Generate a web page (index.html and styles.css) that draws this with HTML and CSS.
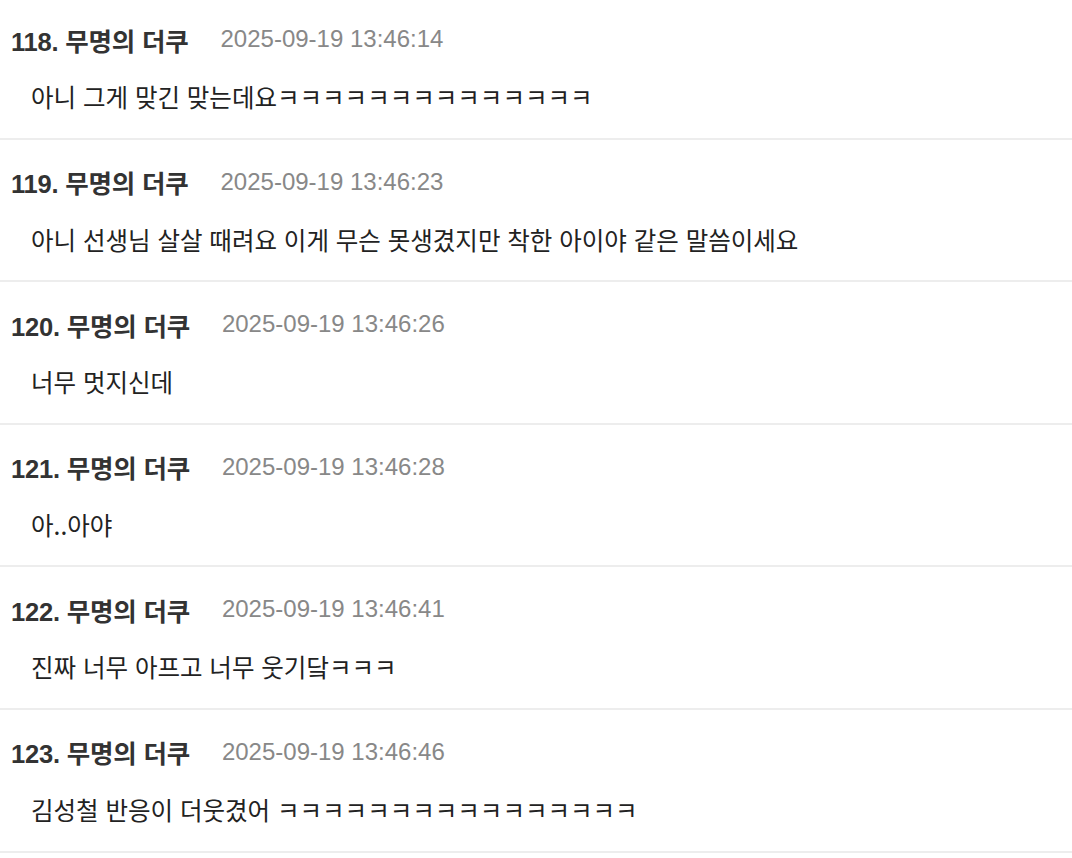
FILE: index.html
```html
<!DOCTYPE html>
<html lang="ko">
<head>
<meta charset="utf-8">
<link rel="stylesheet" href="styles.css">
</head>
<body>
<div class="list">
  <div class="post">
    <div class="head"><span class="name">118. 무명의 더쿠</span><span class="date">2025-09-19 13:46:14</span></div>
    <div class="body">아니 그게 맞긴 맞는데요ㅋㅋㅋㅋㅋㅋㅋㅋㅋㅋㅋㅋㅋㅋ</div>
  </div>
  <div class="post">
    <div class="head"><span class="name">119. 무명의 더쿠</span><span class="date">2025-09-19 13:46:23</span></div>
    <div class="body">아니 선생님 살살 때려요 이게 무슨 못생겼지만 착한 아이야 같은 말씀이세요</div>
  </div>
  <div class="post">
    <div class="head"><span class="name">120. 무명의 더쿠</span><span class="date">2025-09-19 13:46:26</span></div>
    <div class="body">너무 멋지신데</div>
  </div>
  <div class="post">
    <div class="head"><span class="name">121. 무명의 더쿠</span><span class="date">2025-09-19 13:46:28</span></div>
    <div class="body">아..아야</div>
  </div>
  <div class="post">
    <div class="head"><span class="name">122. 무명의 더쿠</span><span class="date">2025-09-19 13:46:41</span></div>
    <div class="body">진짜 너무 아프고 너무 웃기닼ㅋㅋㅋ</div>
  </div>
  <div class="post">
    <div class="head"><span class="name">123. 무명의 더쿠</span><span class="date">2025-09-19 13:46:46</span></div>
    <div class="body">김성철 반응이 더웃겼어 ㅋㅋㅋㅋㅋㅋㅋㅋㅋㅋㅋㅋㅋㅋㅋㅋ</div>
  </div>
</div>
</body>
</html>
```
FILE: styles.css
```css
html, body {
  margin: 0;
  padding: 0;
  background: #ffffff;
}
body {
  font-family: "Liberation Sans", "Noto Sans CJK KR", sans-serif;
  color: #222;
}
.list {
  margin-top: -3px;
}
.post {
  height: 140.6px;
  border-bottom: 2px solid #ededed;
  display: flex;
  flex-direction: column;
}
.head {
  display: flex;
  align-items: center;
  gap: 32px;
  padding-left: 11px;
  height: 30px;
  margin-top: 27px;
  white-space: nowrap;
}
.name {
  font-size: 25.5px;
  font-weight: 700;
  color: #333;
  letter-spacing: -0.2px;
}
.date {
  font-size: 24px;
  color: #888;
}
.body {
  padding-left: 31px;
  font-family: "Noto Sans CJK KR", sans-serif;
  font-size: 24.5px;
  line-height: 30px;
  margin-top: 28px;
  color: #222;
  white-space: nowrap;
}
```
